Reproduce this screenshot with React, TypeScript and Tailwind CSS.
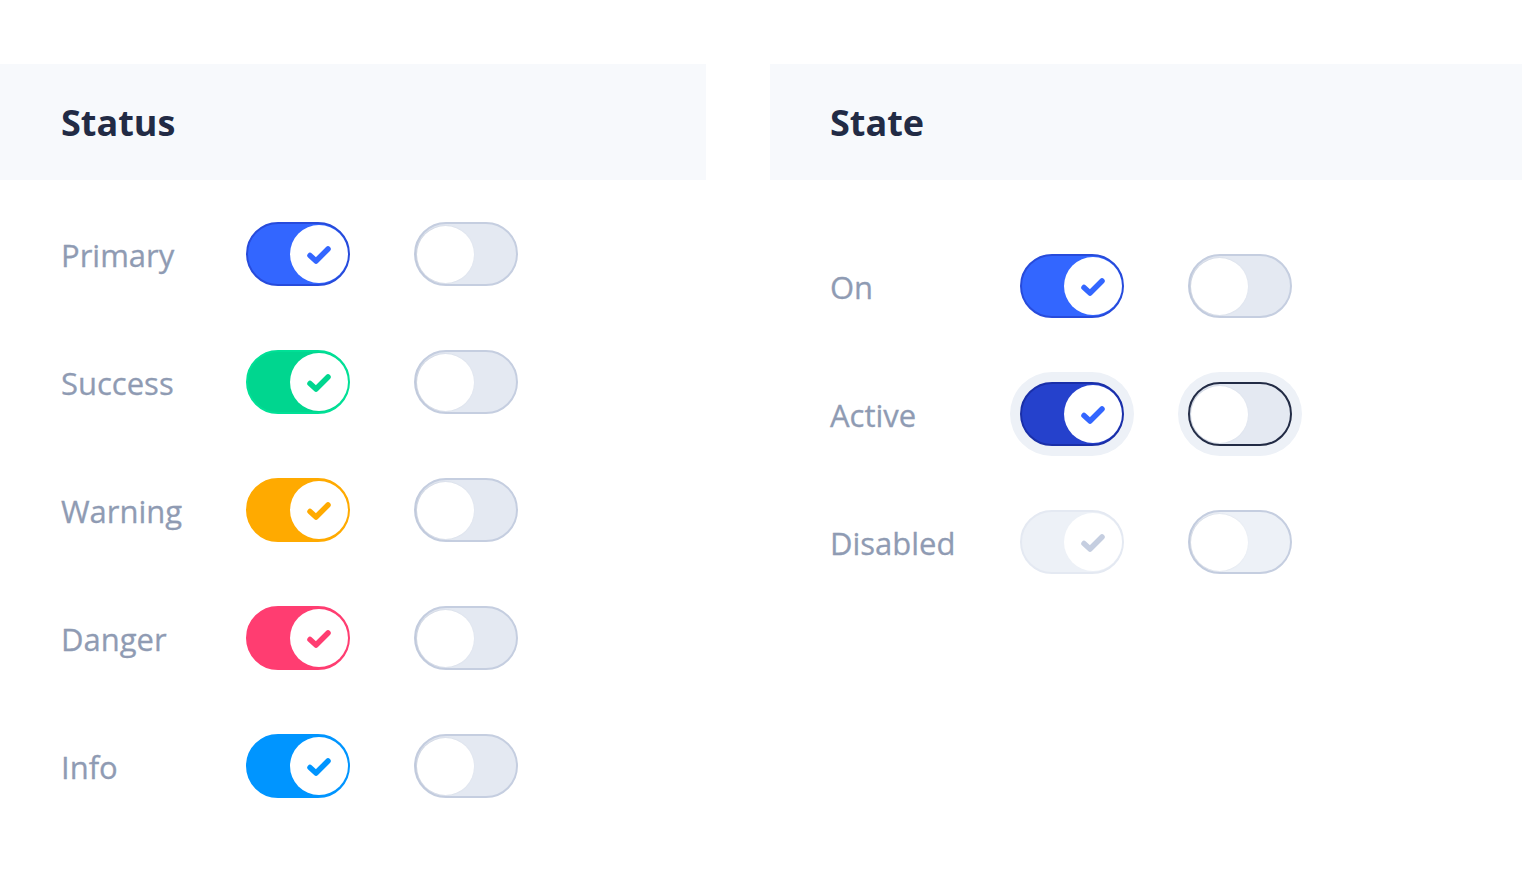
import React from "react";

type Tone = {
  track: string;
  border: string;
  check: string;
};

const tones: Record<string, Tone> = {
  primary: { track: "bg-[#3366ff]", border: "border-[#274bdb]", check: "#3366ff" },
  success: { track: "bg-[#00d68f]", border: "border-[#00e096]", check: "#00d68f" },
  warning: { track: "bg-[#ffaa00]", border: "border-[#ffaa00]", check: "#ffaa00" },
  danger: { track: "bg-[#ff3d71]", border: "border-[#ff3d71]", check: "#ff3d71" },
  info: { track: "bg-[#0095ff]", border: "border-[#0095ff]", check: "#0095ff" },
  active: { track: "bg-[#2541cc]", border: "border-[#1a2fa8]", check: "#3366ff" },
  disabled: { track: "bg-[#edf1f7]", border: "border-[#e4e9f2]", check: "#c5cee0" },
};

function Check({ color }: { color: string }) {
  return (
    <svg viewBox="0 0 28 24" fill="none" className="w-[28px] h-[24px] mt-[2px] shrink-0">
      <path
        d="M5 12.5l6 5.5L23 6"
        stroke={color}
        strokeWidth="5.5"
        strokeLinecap="round"
        strokeLinejoin="round"
      />
    </svg>
  );
}

// checked toggle: coloured track, knob on the right
function ToggleOn({ tone, ring = false }: { tone: Tone; ring?: boolean }) {
  return (
    <div
      className={`w-[104px] h-[64px] rounded-full border-2 ${tone.border} ${tone.track} flex items-center justify-end shrink-0 ${
        ring ? "ring-[10px] ring-[#edf1f7]" : ""
      }`}
    >
      <div className="w-[58px] h-[58px] rounded-full bg-white flex items-center justify-center">
        <Check color={tone.check} />
      </div>
    </div>
  );
}

// unchecked toggle: grey track, knob on the left
function ToggleOff({
  ring = false,
  border = "border-[#c5cee0]",
  track = "bg-[#e4e9f2]",
}: {
  ring?: boolean;
  border?: string;
  track?: string;
}) {
  return (
    <div
      className={`w-[104px] h-[64px] rounded-full border-2 ${border} ${track} flex items-center pl-px shrink-0 ${
        ring ? "ring-[10px] ring-[#edf1f7]" : ""
      }`}
    >
      <div className="w-[57px] h-[57px] rounded-full bg-white shadow-[-1px_0_2px_rgba(143,155,179,0.35)]" />
    </div>
  );
}

function Label({ text, w }: { text: string; w: string }) {
  return (
    <span className={`${w} shrink-0 text-[31px] leading-none text-[#8f9bb3] pt-[2px] [-webkit-text-stroke:0.3px_#8f9bb3]`}>
      {text}
    </span>
  );
}

export default function App() {
  const statusRows = [
    { label: "Primary", tone: tones.primary },
    { label: "Success", tone: tones.success },
    { label: "Warning", tone: tones.warning },
    { label: "Danger", tone: tones.danger },
    { label: "Info", tone: tones.info },
  ];

  return (
    <div
      className="w-[1522px] h-[888px] bg-white flex gap-[64px] pt-[64px] overflow-hidden"
      style={{ fontFamily: '"Open Sans", "Noto Sans", sans-serif' }}
    >
      {/* Status column */}
      <div className="w-[706px] shrink-0">
        <div className="h-[116px] bg-[#f7f9fc] flex items-center pl-[61px] pt-[2px]">
          <h2 className="text-[36px] font-bold text-[#222b45] leading-none">Status</h2>
        </div>
        <div className="flex flex-col gap-[64px] pt-[42px] pl-[61px]">
          {statusRows.map(r => (
            <div key={r.label} className="flex items-center h-[64px]">
              <Label text={r.label} w="w-[185px]" />
              <div className="flex gap-[64px]">
                <ToggleOn tone={r.tone} />
                <ToggleOff />
              </div>
            </div>
          ))}
        </div>
      </div>

      {/* State column */}
      <div className="flex-1">
        <div className="h-[116px] bg-[#f7f9fc] flex items-center pl-[60px] pt-[2px]">
          <h2 className="text-[36px] font-bold text-[#222b45] leading-none">State</h2>
        </div>
        <div className="flex flex-col gap-[64px] pt-[74px] pl-[60px]">
          <div className="flex items-center h-[64px]">
            <Label text="On" w="w-[190px]" />
            <div className="flex gap-[64px]">
              <ToggleOn tone={tones.primary} />
              <ToggleOff />
            </div>
          </div>
          <div className="flex items-center h-[64px]">
            <Label text="Active" w="w-[190px]" />
            <div className="flex gap-[64px]">
              <ToggleOn tone={tones.active} ring />
              <ToggleOff ring border="border-[#222b45]" />
            </div>
          </div>
          <div className="flex items-center h-[64px]">
            <Label text="Disabled" w="w-[190px]" />
            <div className="flex gap-[64px]">
              <ToggleOn tone={tones.disabled} />
              <ToggleOff track="bg-[#edf1f7]" />
            </div>
          </div>
        </div>
      </div>
    </div>
  );
}
